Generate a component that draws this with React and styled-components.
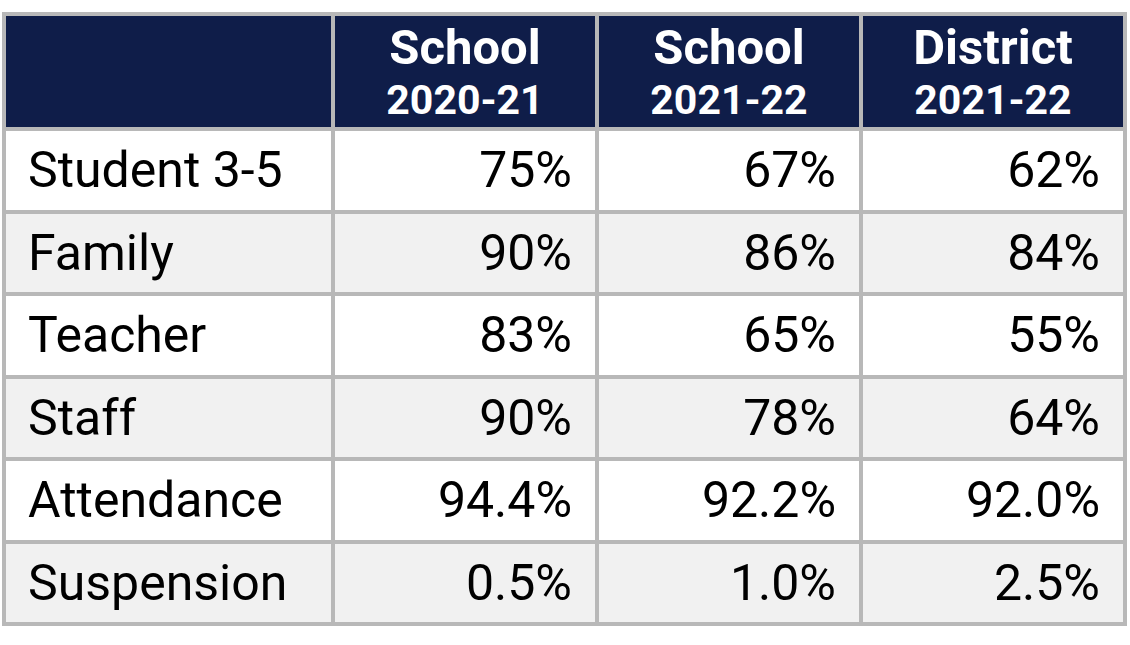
import React from "react";
import styled, { createGlobalStyle } from "styled-components";

const GlobalStyle = createGlobalStyle`
  html, body {
    margin: 0;
    padding: 0;
    background: #ffffff;
  }
  body {
    font-family: Roboto, "Liberation Sans", Arial, sans-serif;
  }
`;

const Page = styled.div`
  width: 1130px;
  height: 645px;
  padding: 12px 0 0 2px;
  box-sizing: border-box;
  background: #ffffff;
`;

const Table = styled.div`
  display: grid;
  grid-template-columns: 325px 260px 260px 260px;
  grid-template-rows: 111px repeat(6, 78.5px);
  gap: 4px;
  padding: 4px;
  width: max-content;
  background: #b8b8b8;
`;

const HeadCell = styled.div`
  background: #0f1d49;
  color: #ffffff;
  display: flex;
  flex-direction: column;
  align-items: center;
  justify-content: center;
  font-weight: 700;
  padding-top: 2px;
`;

const HeadTitle = styled.div`
  font-size: 49px;
  line-height: 54px;
`;

const HeadYear = styled.div`
  font-size: 41px;
  line-height: 50px;
`;

const Cell = styled.div`
  background: ${(p) => (p.shaded ? "#f1f1f1" : "#ffffff")};
  color: #000000;
  font-size: 50px;
  display: flex;
  align-items: center;
  justify-content: ${(p) => (p.label ? "flex-start" : "flex-end")};
  padding: ${(p) => (p.label ? "0 0 0 22px" : "0 23px 0 0")};
  white-space: nowrap;
`;

const columns = [
  { title: "School", year: "2020-21" },
  { title: "School", year: "2021-22" },
  { title: "District", year: "2021-22" },
];

const rows = [
  { label: "Student 3-5", values: ["75%", "67%", "62%"] },
  { label: "Family", values: ["90%", "86%", "84%"] },
  { label: "Teacher", values: ["83%", "65%", "55%"] },
  { label: "Staff", values: ["90%", "78%", "64%"] },
  { label: "Attendance", values: ["94.4%", "92.2%", "92.0%"] },
  { label: "Suspension", values: ["0.5%", "1.0%", "2.5%"] },
];

export default function App() {
  return (
    <Page>
      <GlobalStyle />
      <Table>
        <HeadCell />
        {columns.map((c, i) => (
          <HeadCell key={i}>
            <HeadTitle>{c.title}</HeadTitle>
            <HeadYear>{c.year}</HeadYear>
          </HeadCell>
        ))}
        {rows.map((r, i) => (
          <React.Fragment key={r.label}>
            <Cell label shaded={i % 2 === 1}>
              {r.label}
            </Cell>
            {r.values.map((v, j) => (
              <Cell key={j} shaded={i % 2 === 1}>
                {v}
              </Cell>
            ))}
          </React.Fragment>
        ))}
      </Table>
    </Page>
  );
}
